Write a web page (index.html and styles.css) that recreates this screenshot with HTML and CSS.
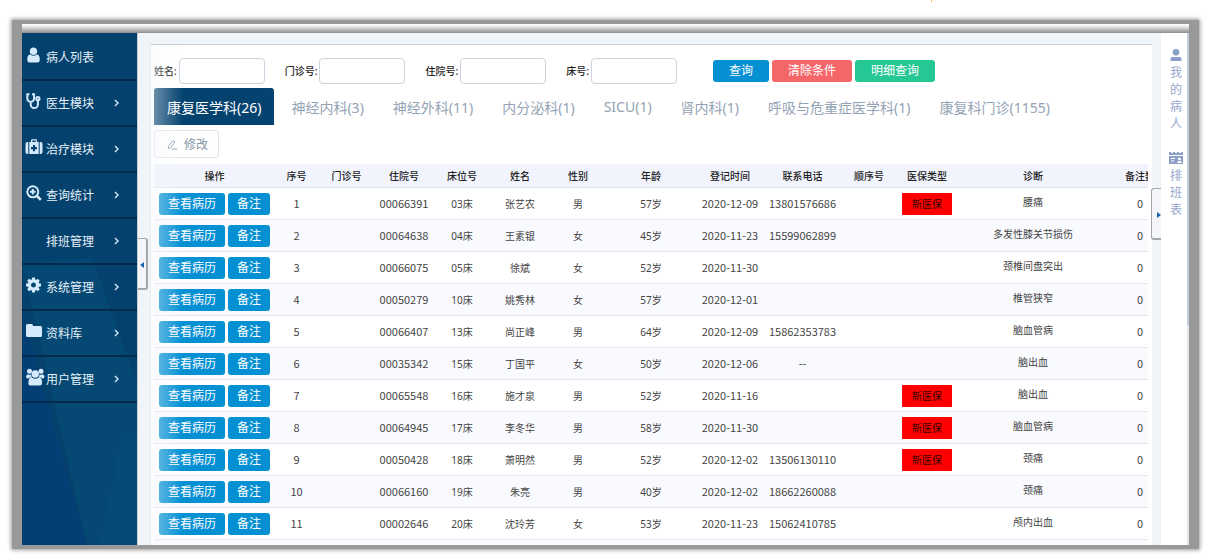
FILE: index.html
```html
<!DOCTYPE html>
<html lang="zh-CN">
    <head>
        <meta charset="utf-8">
        <title>病人列表</title>
        <link rel="stylesheet" href="styles.css">
    </head>
    <body>
        <div class="tick"></div>
        <div class="frame">
            <div class="titlebar"></div>
            <div class="app">

                <!-- left menu -->
                <nav class="sidebar">
                    <svg class="sidebar-bg" viewBox="0 0 115 512" preserveAspectRatio="none" aria-hidden="true">
                        <path d="M0 280L65 512H0z" fill="#033f74"/>
                        <path d="M0 230L65 512H115V350L70 225z" fill="#0a5580" opacity=".35"/>
                        <path d="M101 400L78 512H115V400z" fill="#0a5580" opacity=".25"/>
                    </svg>
                    <a class="menu" href="#">
                        <svg class="micon slim" viewBox="128 128 1536 1536"><path d="M1536 1399q0 109-62.5 187t-150.5 78h-854q-88 0-150.5-78t-62.5-187q0-85 8.500-160.500t31.500-152 58.500-131 94-89 134.500-34.500q131 128 313 128t313-128q76 0 134.500 34.500t94 89 58.500 131 31.500 152 8.500 160.500zm-256-887q0 159-112.500 271.500t-271.500 112.500-271.500-112.500-112.500-271.500 112.500-271.500 271.500-112.500 271.500 112.500 112.500 271.500z"/></svg>
                        <span>病人列表</span>
                    </a>
                    <a class="menu" href="#">
                        <svg class="micon line" viewBox="0 0 16 16"><path d="M3.500 1.200H1.300v4.300a3.400 3.400 0 0 0 6.800 0V1.200H6M4.700 9v2.400a3.600 3.600 0 0 0 7.200 0V7.500"/><circle cx="11.900" cy="5.700" r="1.600"/></svg>
                        <span>医生模块</span>
                        <svg class="chev" viewBox="0 0 6 8"><path d="M1 1l3 3-3 3"/></svg>
                    </a>
                    <a class="menu" href="#">
                        <svg class="micon" viewBox="0 0 16 16"><path d="M2.300 3v12H1.500Q-.5 15-.5 13.300V4.700Q-.5 3 1.500 3zM13.700 3h.8q2 0 2 1.700v8.600q0 1.700-2 1.700h-.8z"/><path fill-rule="evenodd" d="M3.300 3H5V1.500Q5 .3 6.200.3h3.600Q11 .3 11 1.500V3h1.700v12H3.300zM6.300 3h3.400V1.500H6.300zM7 6v2H5v2.200h2v2h2v-2h2V8H9V6z"/></svg>
                        <span>治疗模块</span>
                        <svg class="chev" viewBox="0 0 6 8"><path d="M1 1l3 3-3 3"/></svg>
                    </a>
                    <a class="menu" href="#">
                        <svg class="micon line" viewBox="0 0 16 16"><circle cx="6.800" cy="6.800" r="5.500"/><path d="M6.800 4v5.600M4 6.800h5.600"/><path d="M11 11l3.800 3.800" stroke-width="2.600"/></svg>
                        <span>查询统计</span>
                        <svg class="chev" viewBox="0 0 6 8"><path d="M1 1l3 3-3 3"/></svg>
                    </a>
                    <a class="menu" href="#">
                        <i class="micon"></i>
                        <span>排班管理</span>
                        <svg class="chev" viewBox="0 0 6 8"><path d="M1 1l3 3-3 3"/></svg>
                    </a>
                    <a class="menu" href="#">
                        <svg class="micon slim" viewBox="128 128 1536 1536"><path d="M1152 896q0-106-75-181t-181-75-181 75-75 181 75 181 181 75 181-75 75-181zm512-109v222q0 12-8 23t-20 13l-185 28q-19 54-39 91 35 50 107 138 10 12 10 25t-9 23q-27 37-99 108t-94 71q-12 0-26-9l-138-108q-44 23-91 38-16 136-29 186-7 28-36 28h-222q-14 0-24.500-8.500t-11.500-21.500l-28-184q-49-16-90-37l-141 107q-10 9-25 9-14 0-25-11-126-114-165-168-7-10-7-23 0-12 8-23 15-21 51-66.500t54-70.500q-27-50-41-99l-183-27q-13-2-21-12.500t-8-23.500v-222q0-12 8-23t19-13l186-28q14-46 39-92-40-57-107-138-10-12-10-24 0-10 9-23 26-36 98.500-107.500t94.500-71.500q13 0 26 10l138 107q44-23 91-38 16-136 29-186 7-28 36-28h222q14 0 24.500 8.500t11.500 21.500l28 184q49 16 90 37l142-107q9-9 24-9 13 0 25 10 129 119 165 170 7 8 7 22 0 12-8 23-15 21-51 66.500t-54 70.500q26 50 41 98l183 28q13 2 21 12.500t8 23.500z"/></svg>
                        <span>系统管理</span>
                        <svg class="chev" viewBox="0 0 6 8"><path d="M1 1l3 3-3 3"/></svg>
                    </a>
                    <a class="menu" href="#">
                        <svg class="micon" viewBox="0 0 16 16"><path d="M0 2.500Q0 1 1.500 1h4Q7 1 7 2.500V3h7.500Q16 3 16 4.500v8q0 1.500-1.500 1.500h-13Q0 14 0 12.500z"/></svg>
                        <span>资料库</span>
                        <svg class="chev" viewBox="0 0 6 8"><path d="M1 1l3 3-3 3"/></svg>
                    </a>
                    <a class="menu" href="#">
                        <!-- drawn a little wider than its box -->
                        <svg class="micon" viewBox="0 0 16 16"><circle cx="3.500" cy="2.300" r="2.500"/><circle cx="15" cy="2.300" r="2.500"/><circle cx="9.250" cy="5" r="3.700"/><path d="M2 5.200q1.500 1 3 .3Q5.200 7.800 6 8.600H4Q3 8.600 2.500 9.600 0 9.600 0 8.100 0 5.700 2 5.200zM16.500 5.200q-1.500 1-3 .3Q13.300 7.800 12.500 8.600h2q1 0 1.500 1Q18.500 9.600 18.500 8.100 18.500 5.700 16.500 5.200zM5.800 8.600q3.500 2.500 7 0 3.300 0 3.300 5.300 0 2.600-2.300 2.600H4.700q-2.300 0-2.300-2.600Q2.400 8.600 5.800 8.600z"/></svg>
                        <span>用户管理</span>
                        <svg class="chev" viewBox="0 0 6 8"><path d="M1 1l3 3-3 3"/></svg>
                    </a>
                </nav>

                <main class="main">
                    <button class="handle handle-left" type="button" aria-label="收起菜单"></button>
                    <button class="handle handle-right" type="button" aria-label="展开侧栏"></button>

                    <section class="card">
                        <form class="search">
                            <label for="xm">姓名:</label><input id="xm" type="text">
                            <label for="mz">门诊号:</label><input id="mz" type="text">
                            <label for="zy">住院号:</label><input id="zy" type="text">
                            <label for="ch">床号:</label><input id="ch" type="text">
                            <div class="search-btns">
                                <button class="btn blue" type="button">查询</button>
                                <button class="btn red" type="button">清除条件</button>
                                <button class="btn green" type="button">明细查询</button>
                            </div>
                        </form>

                        <div class="tabs">
                            <button class="tab active" type="button">康复医学科(26)</button>
                            <button class="tab" type="button">神经内科(3)</button>
                            <button class="tab" type="button">神经外科(11)</button>
                            <button class="tab" type="button">内分泌科(1)</button>
                            <button class="tab" type="button">SICU(1)</button>
                            <button class="tab" type="button">肾内科(1)</button>
                            <button class="tab" type="button">呼吸与危重症医学科(1)</button>
                            <button class="tab" type="button">康复科门诊(1155)</button>
                        </div>

                        <button class="edit" type="button">
                            <svg viewBox="0 0 12 12"><path d="M1.500 10.500V8L6.500 1.500l2.200 1.700L4 9.500zM5 11h6"/></svg>
                            修改
                        </button>

                        <div class="tablewrap">
                            <table class="patients">
                                <colgroup>
                                    <col class="c-op"><col class="c-no"><col class="c-mz"><col class="c-std"><col class="c-std"><col class="c-std"><col class="c-std">
                                    <col class="c-age"><col class="c-date"><col class="c-tel"><col class="c-std"><col class="c-std"><col class="c-diag"><col class="c-cnt">
                                </colgroup>
                                <thead>
                                    <tr><th>操作</th><th>序号</th><th>门诊号</th><th>住院号</th><th>床位号</th><th>姓名</th><th>性别</th><th>年龄</th><th>登记时间</th><th>联系电话</th><th>顺序号</th><th>医保类型</th><th>诊断</th><th>备注数</th></tr>
                                </thead>
                                <tbody>
                                    <tr>
                                        <td class="ops"><button class="btn blue" type="button">查看病历</button><button class="btn blue" type="button">备注</button></td>
                                        <td class="num">1</td><td></td><td class="num">00066391</td><td>03床</td><td>张艺农</td><td>男</td><td>57岁</td><td class="num">2020-12-09</td><td class="num">13801576686</td><td></td><td><span class="badge">新医保</span></td><td class="diag">腰痛</td><td class="num">0</td>
                                    </tr>
                                    <tr>
                                        <td class="ops"><button class="btn blue" type="button">查看病历</button><button class="btn blue" type="button">备注</button></td>
                                        <td class="num">2</td><td></td><td class="num">00064638</td><td>04床</td><td>王素银</td><td>女</td><td>45岁</td><td class="num">2020-11-23</td><td class="num">15599062899</td><td></td><td></td><td class="diag">多发性膝关节损伤</td><td class="num">0</td>
                                    </tr>
                                    <tr>
                                        <td class="ops"><button class="btn blue" type="button">查看病历</button><button class="btn blue" type="button">备注</button></td>
                                        <td class="num">3</td><td></td><td class="num">00066075</td><td>05床</td><td>徐斌</td><td>女</td><td>52岁</td><td class="num">2020-11-30</td><td></td><td></td><td></td><td class="diag">颈椎间盘突出</td><td class="num">0</td>
                                    </tr>
                                    <tr>
                                        <td class="ops"><button class="btn blue" type="button">查看病历</button><button class="btn blue" type="button">备注</button></td>
                                        <td class="num">4</td><td></td><td class="num">00050279</td><td>10床</td><td>姚秀林</td><td>女</td><td>57岁</td><td class="num">2020-12-01</td><td></td><td></td><td></td><td class="diag">椎管狭窄</td><td class="num">0</td>
                                    </tr>
                                    <tr>
                                        <td class="ops"><button class="btn blue" type="button">查看病历</button><button class="btn blue" type="button">备注</button></td>
                                        <td class="num">5</td><td></td><td class="num">00066407</td><td>13床</td><td>尚正峰</td><td>男</td><td>64岁</td><td class="num">2020-12-09</td><td class="num">15862353783</td><td></td><td></td><td class="diag">脑血管病</td><td class="num">0</td>
                                    </tr>
                                    <tr>
                                        <td class="ops"><button class="btn blue" type="button">查看病历</button><button class="btn blue" type="button">备注</button></td>
                                        <td class="num">6</td><td></td><td class="num">00035342</td><td>15床</td><td>丁国平</td><td>女</td><td>50岁</td><td class="num">2020-12-06</td><td class="num">--</td><td></td><td></td><td class="diag">脑出血</td><td class="num">0</td>
                                    </tr>
                                    <tr>
                                        <td class="ops"><button class="btn blue" type="button">查看病历</button><button class="btn blue" type="button">备注</button></td>
                                        <td class="num">7</td><td></td><td class="num">00065548</td><td>16床</td><td>施才泉</td><td>男</td><td>52岁</td><td class="num">2020-11-16</td><td></td><td></td><td><span class="badge">新医保</span></td><td class="diag">脑出血</td><td class="num">0</td>
                                    </tr>
                                    <tr>
                                        <td class="ops"><button class="btn blue" type="button">查看病历</button><button class="btn blue" type="button">备注</button></td>
                                        <td class="num">8</td><td></td><td class="num">00064945</td><td>17床</td><td>李冬华</td><td>男</td><td>58岁</td><td class="num">2020-11-30</td><td></td><td></td><td><span class="badge">新医保</span></td><td class="diag">脑血管病</td><td class="num">0</td>
                                    </tr>
                                    <tr>
                                        <td class="ops"><button class="btn blue" type="button">查看病历</button><button class="btn blue" type="button">备注</button></td>
                                        <td class="num">9</td><td></td><td class="num">00050428</td><td>18床</td><td>萧明然</td><td>男</td><td>52岁</td><td class="num">2020-12-02</td><td class="num">13506130110</td><td></td><td><span class="badge">新医保</span></td><td class="diag">颈痛</td><td class="num">0</td>
                                    </tr>
                                    <tr>
                                        <td class="ops"><button class="btn blue" type="button">查看病历</button><button class="btn blue" type="button">备注</button></td>
                                        <td class="num">10</td><td></td><td class="num">00066160</td><td>19床</td><td>朱亮</td><td>男</td><td>40岁</td><td class="num">2020-12-02</td><td class="num">18662260088</td><td></td><td></td><td class="diag">颈痛</td><td class="num">0</td>
                                    </tr>
                                    <tr>
                                        <td class="ops"><button class="btn blue" type="button">查看病历</button><button class="btn blue" type="button">备注</button></td>
                                        <td class="num">11</td><td></td><td class="num">00002646</td><td>20床</td><td>沈玲芳</td><td>女</td><td>53岁</td><td class="num">2020-11-23</td><td class="num">15062410785</td><td></td><td></td><td class="diag">颅内出血</td><td class="num">0</td>
                                    </tr>
                                    <tr><td colspan="14"></td></tr>
                                </tbody>
                            </table>
                        </div>
                    </section>
                </main>

                <!-- right rail -->
                <aside class="rail">
                    <a href="#">
                        <svg viewBox="0 0 12 12"><circle cx="6" cy="3.300" r="3.300"/><path d="M.5 12V10q0-2 2-2h7q2 0 2 2v2z"/></svg>
                        <span>我的病人</span>
                    </a>
                    <a href="#">
                        <svg class="cal" viewBox="0 0 14 12"><path fill-rule="evenodd" d="M0 0h2v1h2V0h2v1h2V0h2v1h2V0h2v3H0zM0 4h14v8H0zM2 6v1h4V6zM2 8.500v1h3v-1zM10.500 5.500a1.500 1.500 0 1 0 .01 0zM8 11h5q0-2-2.500-2T8 11z"/></svg>
                        <span>排班表</span>
                    </a>
                </aside>
            </div>
        </div>
    </body>
</html>
```

FILE: styles.css
```css
*{ box-sizing: border-box; margin: 0; padding: 0; }

html, body
{
    height: 100%;
    overflow: hidden;
    background: #fff;
}

body
{
    display: flex;
    font-family: "Noto Sans", "Noto Sans CJK SC", sans-serif;
    font-size: 12px;
    color: #444;
}

button, input { font-family: inherit; }
button { cursor: pointer; }
a { text-decoration: none; }

.tick
{
    position: absolute;
    top: 0;
    left: 931px;
    width: 1px;
    height: 2px;
    background: #f0c040;
}

/* grey window frame */
.frame
{
    flex: 1;
    min-width: 0;
    display: flex;
    flex-direction: column;
    margin: 20px 15px 11px 12px;
    padding: 4px 10px;
    background: #999;
    box-shadow: 0 0 4px 1px #999;
}
.titlebar
{
    flex: none;
    height: 9px;
    background: linear-gradient(#fff, #eee 25%, #8c8c8c);
}
.app
{
    flex: 1;
    min-height: 0;
    display: flex;
    overflow: hidden;
    background: #eff4f9;
}

/* sidebar */
.sidebar
{
    position: relative;
    flex: none;
    width: 115px;
    padding-top: 2px;
    background: #04416c;
}
.sidebar-bg
{
    position: absolute;
    top: 0;
    left: 0;
    width: 100%;
    height: 100%;
}
.menu
{
    position: relative;
    display: flex;
    align-items: center;
    gap: 4px;
    height: 46px;
    padding: 0 17px 0 4px;
    border-bottom: 2px solid #032a4d;
    color: #e6f1fa;
    white-space: nowrap;
}
.micon
{
    flex: none;
    width: 16px;
    height: 16px;
    margin-bottom: 4px;
    overflow: visible;
    fill: #d5eafc;
}
.micon.slim { padding-right: 1px; }
.micon.line
{
    fill: none;
    stroke: #d5eafc;
    stroke-width: 2;
}
.chev
{
    width: 6px;
    height: 8px;
    margin-left: auto;
    fill: none;
    stroke: #d5eafc;
    stroke-width: 1.4;
}

/* main area */
.main
{
    position: relative;
    flex: 1;
    min-width: 0;
    padding: 11px 9px 0 12px;
    border-left: 1px solid #c9ced4;
}
.handle
{
    position: absolute;
    width: 10px;
    height: 52px;
    border: 1px solid #a3a6aa;
    background: #f3f5f9;
    z-index: 2;
}
.handle::before
{
    content: "";
    position: absolute;
    top: 23px;
    border: 3px solid transparent;
}
.handle-left
{
    top: 205px;
    left: 0;
    border-width: 1px 2px 2px 0;
    border-radius: 0 3px 3px 0;
}
.handle-left::before { left: 2px; border-right-color: #1c64a8; border-left-width: 0; border-right-width: 4px; }
.handle-right
{
    top: 155px;
    right: 0;
    border-width: 1px 0 2px 1px;
    border-radius: 3px 0 0 3px;
}
.handle-right::before { right: 0; border-left-color: #1c64a8; border-right-width: 0; border-left-width: 4px; }

.card
{
    position: relative;
    height: 100%;
    padding: 13px 4px 0 3px;
    overflow: hidden;
    background: #fff;
    border-top: 1px solid #c8d0d8;
    border-left: 1px solid #e8ebef;
}
/* soft fade along the left edge */
.card::after
{
    content: "";
    position: absolute;
    top: 0;
    bottom: 0;
    left: 0;
    width: 32px;
    background: linear-gradient(90deg, rgba(247,249,252,.45), rgba(255,255,255,0));
    pointer-events: none;
}

.search
{
    display: flex;
    align-items: center;
    height: 26px;
}
.search label
{
    margin-right: 2px;
    padding-bottom: 2px;
    font-size: 10px;
    font-weight: 500;
    color: #222;
    white-space: nowrap;
}
.search input
{
    width: 86px;
    height: 26px;
    margin-right: 20px;
    padding: 0 6px;
    border: 1px solid #ccd3de;
    border-radius: 4px;
    background: #fff;
}
.search-btns
{
    display: flex;
    gap: 3px;
    margin-left: 16px;
}

.btn
{
    height: 22px;
    border: 0;
    border-radius: 3px;
    color: #fff;
    font-size: 12px;
    line-height: 22px;
    white-space: nowrap;
}
.search .btn { padding: 0 16px; }
.blue { background: #0590d4; }
.red { background: #f56669; }
.green { background: #25c795; }

.tabs
{
    display: flex;
    gap: 5px;
    margin-top: 4px;
}
.tab
{
    height: 37px;
    padding: 0 12px;
    border: 0;
    border-radius: 3px 3px 0 0;
    background: none;
    font-size: 14px;
    color: #93a3b5;
    white-space: nowrap;
}
.tab.active
{
    padding: 0 13px;
    background: #04426f;
    color: #fff;
}

.edit
{
    display: flex;
    align-items: center;
    gap: 6px;
    height: 28px;
    margin-top: 5px;
    padding: 0 10px 0 12px;
    border: 1px solid #dfe4ea;
    border-radius: 3px;
    background: #fff;
    color: #8696a8;
    font-size: 12px;
}
.edit svg
{
    width: 11px;
    height: 11px;
    fill: none;
    stroke: #8696a8;
}

/* patient table */
.tablewrap
{
    margin-top: 6px;
    overflow: hidden;
}
.patients
{
    width: 100%;
    min-width: 1016px;
    table-layout: fixed;
    border-collapse: separate;
    border-spacing: 0;
    font-size: 10px;
    text-align: center;
}
.c-op { width: 121px; }
.c-no { width: 43px; }
.c-mz { width: 57px; }
.c-std { width: 58px; }
.c-age { width: 88px; }
.c-date { width: 70px; }
.c-tel { width: 75px; }
.c-diag { width: 154px; }
.c-cnt { width: 60px; }

.patients th
{
    height: 24px;
    background: #f1f3fd;
    border-bottom: 1px solid #dfe3ea;
    font-weight: 500;
    color: #222;
    white-space: nowrap;
}
.patients td
{
    height: 32px;
    border-bottom: 1px solid #e3e7ed;
    white-space: nowrap;
}
.patients tr:nth-child(even) td { background: #f9fafe; }
.patients .num
{
    padding-bottom: 1px;
    font-family: "Noto Sans CJK SC", sans-serif;
    font-size: 11px;
}
.patients .diag { padding-bottom: 4px; }

.ops .btn { padding: 0 9px; }
.ops .btn + .btn { margin-left: 3px; }

.badge
{
    display: inline-block;
    width: 50px;
    height: 22px;
    background: #f00;
    color: #300;
    line-height: 22px;
}

/* right rail */
.rail
{
    flex: none;
    width: 28px;
    padding: 16px 0 0 2px;
    background: linear-gradient(#c5cdd9 57%, #e3e8ef 57%) right / 2px 100% no-repeat #fff;
}
.rail a
{
    display: flex;
    flex-direction: column;
    align-items: center;
    margin-bottom: 20px;
    color: #95a5cc;
}
.rail svg
{
    width: 12px;
    height: 12px;
    margin-bottom: 3px;
    fill: #8d9fc8;
}
.rail .cal { width: 14px; }
.rail span
{
    width: 12px;
    line-height: 17px;
    word-break: break-all;
}
```
